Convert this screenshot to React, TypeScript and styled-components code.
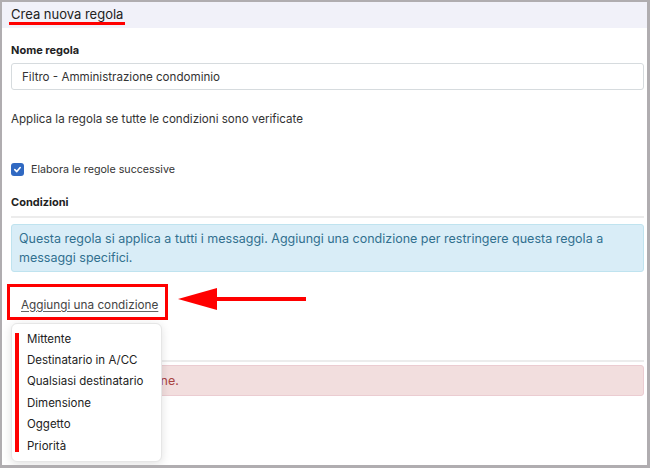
import React from 'react';
import styled, { createGlobalStyle } from 'styled-components';

const GlobalStyle = createGlobalStyle`
  html, body {
    margin: 0;
    padding: 0;
    background: #ffffff;
  }
  body {
    font-family: Inter, "Noto Sans", "Liberation Sans", sans-serif;
    color: #333;
  }
`;

const Frame = styled.div`
    position: relative;
    width: 650px;
    height: 468px;
    box-sizing: border-box;
    border-style: solid;
    border-color: #b0adb0;
    border-width: 2px 3px 3px 2px;
    background: #fff;
    overflow: hidden;
  `,
  Header = styled.div`
    height: 26px;
    box-sizing: border-box;
    padding: 1px 0 0 7px;
    background: #f1f1f9;
  `,
  Title = styled.div`
    display: inline-block;
    padding: 0 2px 0 2px;
    font-size: 13px;
    line-height: 15px;
    color: #222;
    border-bottom: 3px solid #f00;
  `,
  Body = styled.div`
    padding: 0 3px 0 9px;
  `,
  Label = styled.div<{ top: number }>`
    margin-top: ${(p) => p.top}px;
    font-size: 11px;
    line-height: 16px;
    font-weight: 700;
    color: #222;
  `,
  TextInput = styled.div`
    margin-top: 5px;
    height: 27px;
    box-sizing: border-box;
    border: 1px solid #d6dbde;
    border-radius: 3px;
    padding: 0 10px;
    display: flex;
    align-items: center;
    font-size: 11.6px;
    color: #333;
  `,
  Paragraph = styled.div`
    margin-top: 20px;
    font-size: 11.6px;
    line-height: 18px;
    color: #333;
  `,
  CheckRow = styled.div`
    margin-top: 32px;
    display: flex;
    align-items: center;
    gap: 7px;
    height: 18px;
    font-size: 10.7px;
    color: #333;
  `,
  CheckBox = styled.span`
    width: 13px;
    height: 13px;
    border-radius: 3px;
    background: #3069c2;
    display: flex;
    align-items: center;
    justify-content: center;
  `,
  Rule = styled.div<{ top: number }>`
    margin-top: ${(p) => p.top}px;
    height: 2px;
    background: #ececec;
  `,
  Alert = styled.div<{ kind: 'info' | 'error' }>`
    margin-top: ${(p) => (p.kind === 'info' ? 6 : 3)}px;
    box-sizing: border-box;
    border: 1px solid ${(p) => (p.kind === 'info' ? '#bfe3ef' : '#ebccd1')};
    background: ${(p) => (p.kind === 'info' ? '#d9edf7' : '#f2dede')};
    color: ${(p) => (p.kind === 'info' ? '#31708f' : '#a94442')};
    border-radius: 3px;
    padding: ${(p) => (p.kind === 'info' ? '4px 20px 4px 7px' : '5px 3px')};
    font-size: 12.5px;
    line-height: 19px;
  `,
  AddRow = styled.div`
    margin-top: 12px;
    display: flex;
    align-items: center;
  `,
  AddBox = styled.div`
    position: relative;
    margin-left: -4px;
    width: 161px;
    height: 36px;
    box-sizing: border-box;
    border: 3px solid #f00;
    padding: 0 0 0 11px;
    display: flex;
    align-items: center;
  `,
  AddLink = styled.span`
    margin-top: 5px;
    font-size: 11.75px;
    color: #444;
    text-decoration: underline;
    text-underline-offset: 2px;
    text-decoration-color: #666;
  `,
  Arrow = styled.svg`
    margin-left: 10px;
    margin-top: -4px;
    display: block;
  `,
  Menu = styled.div`
    position: absolute;
    top: 36px;
    left: 1px;
    width: 151px;
    box-sizing: border-box;
    padding: 4px 0 5px 3px;
    background: #fff;
    border: 1px solid #e6e6e6;
    border-radius: 6px;
    box-shadow: 0 2px 10px rgba(0, 0, 0, 0.12);
    display: flex;
    z-index: 2;
  `,
  MenuMark = styled.div`
    width: 4px;
    margin: 5px 0 4px 0;
    background: #f00;
  `,
  MenuList = styled.div`
    display: flex;
    flex-direction: column;
    padding-left: 8px;
  `,
  MenuItem = styled.div`
    height: 21.4px;
    display: flex;
    align-items: center;
    font-size: 11.5px;
    color: #222;
    white-space: nowrap;
  `;

const conditions = [
  'Mittente',
  'Destinatario in A/CC',
  'Qualsiasi destinatario',
  'Dimensione',
  'Oggetto',
  'Priorità',
];

export default function App(): JSX.Element {
  return (
    <>
      <GlobalStyle />
      <Frame>
        <Header>
          <Title>Crea nuova regola</Title>
        </Header>
        <Body>
          <Label top={14}>Nome regola</Label>
          <TextInput>Filtro - Amministrazione condominio</TextInput>
          <Paragraph>Applica la regola se tutte le condizioni sono verificate</Paragraph>
          <CheckRow>
            <CheckBox>
              <svg width="9" height="9" viewBox="0 0 10 10">
                <path
                  d="M2 5.2 L4.2 7.3 L8 2.8"
                  fill="none"
                  stroke="#fff"
                  strokeWidth="1.8"
                  strokeLinecap="round"
                  strokeLinejoin="round"
                />
              </svg>
            </CheckBox>
            Elabora le regole successive
          </CheckRow>
          <Label top={16}>Condizioni</Label>
          <Rule top={6} />
          <Alert kind="info">
            Questa regola si applica a tutti i messaggi. Aggiungi una condizione per restringere
            questa regola a messaggi specifici.
          </Alert>
          <AddRow>
            <AddBox>
              <AddLink>Aggiungi una condizione</AddLink>
              <Menu>
                <MenuMark />
                <MenuList>
                  {conditions.map((c) => (
                    <MenuItem key={c}>{c}</MenuItem>
                  ))}
                </MenuList>
              </Menu>
            </AddBox>
            <Arrow width="130" height="28" viewBox="0 0 130 28">
              <polygon points="0,13 39,2 39,24" fill="#f00" />
              <rect x="36" y="11" width="92" height="4" fill="#f00" />
            </Arrow>
          </AddRow>
          <Rule top={40} />
          <Alert kind="error">Aggiungi almeno un'azione.</Alert>
        </Body>
      </Frame>
    </>
  );
}
